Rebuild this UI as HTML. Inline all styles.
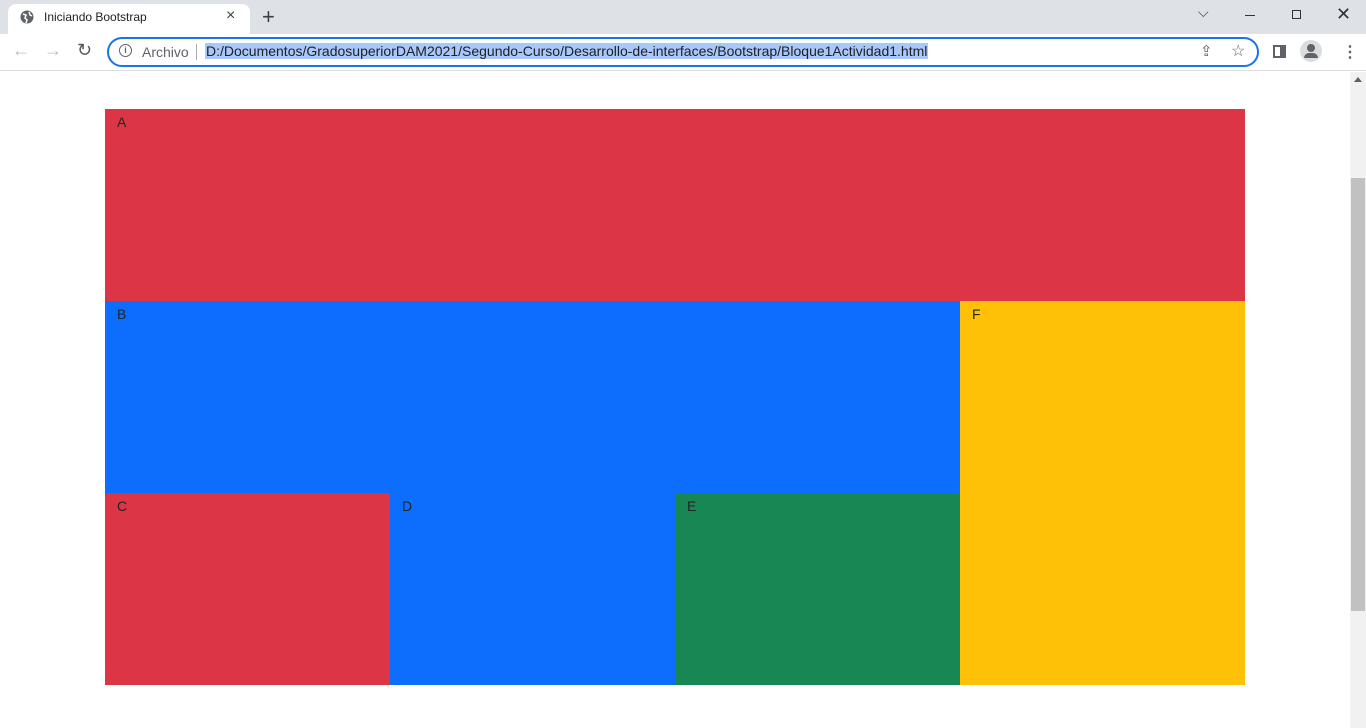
<!DOCTYPE html><html><head><style>
*{margin:0;padding:0;box-sizing:border-box}
body{width:1366px;height:728px;overflow:hidden;background:#fff;font-family:"Liberation Sans",sans-serif;position:relative}
.a{position:absolute}
.b{position:absolute;font-size:14px;color:#212529;padding:5px 12px}
</style></head><body>
<div class="a" style="left:0;top:0;width:1366px;height:34px;background:#dee1e6"></div>
<div class="a" style="left:8px;top:4px;width:242px;height:30px;background:#fff;border-radius:8px 8px 0 0"></div>
<svg class="a" style="left:20px;top:10px" width="14" height="14" viewBox="0 0 14 14"><circle cx="7" cy="7" r="6.5" fill="#5f6368"/><path d="M3 4 L6 5 L5 8 L7 10 L6 13 M9 2 L10 5 L12 6" stroke="#fff" stroke-width="1.5" fill="none"/></svg>
<div class="a" style="left:44px;top:10px;font-size:12px;color:#202124">Iniciando Bootstrap</div>
<div class="a" style="left:226px;top:7px;font-size:16px;color:#3c4043">×</div>
<div class="a" style="left:262px;top:4px;font-size:22px;color:#3c4043">+</div>
<div class="a" style="left:1198px;top:4px;font-size:14px;color:#3c4043">⌵</div>
<div class="a" style="left:1245px;top:15px;width:10px;height:1px;background:#333"></div>
<div class="a" style="left:1292px;top:10px;width:9px;height:9px;border:1px solid #333"></div>
<div class="a" style="left:1336px;top:4px;font-size:18px;color:#333">✕</div>
<div class="a" style="left:0;top:34px;width:1366px;height:37px;background:#fff;border-bottom:1px solid #dadce0"></div>
<div class="a" style="left:12px;top:40px;font-size:18px;color:#bbb">←</div>
<div class="a" style="left:44px;top:40px;font-size:18px;color:#bbb">→</div>
<div class="a" style="left:77px;top:40px;font-size:18px;color:#555">↻</div>
<div class="a" style="left:107px;top:37px;width:1152px;height:30px;border:2px solid #1a73e8;border-radius:15px;background:#fff"></div>
<div class="a" style="left:119px;top:44px;width:13px;height:13px;border:1.5px solid #5f6368;border-radius:50%;font-size:9px;text-align:center;line-height:10px;color:#5f6368;font-weight:bold">i</div>
<div class="a" style="left:142px;top:44px;font-size:14px;color:#5f6368">Archivo</div>
<div class="a" style="left:196px;top:44px;width:1px;height:16px;background:#aaa"></div>
<div class="a" style="left:205px;top:43px;font-size:14px;color:#202124;background:#a8c7fa;padding:0 1px">D:/Documentos/GradosuperiorDAM2021/Segundo-Curso/Desarrollo-de-interfaces/Bootstrap/Bloque1Actividad1.html</div>
<div class="a" style="left:1200px;top:42px;font-size:15px;color:#5f6368">⇪</div>
<div class="a" style="left:1231px;top:41px;font-size:16px;color:#5f6368">☆</div>
<div class="a" style="left:1273px;top:45px;width:13px;height:13px;border:2px solid #5f6368;border-right-width:6px"></div>
<div class="a" style="left:1300px;top:40px;width:22px;height:22px;border-radius:50%;background:#dadce0"></div>
<div class="a" style="left:1307px;top:44px;width:8px;height:8px;border-radius:50%;background:#5f6368"></div>
<div class="a" style="left:1304px;top:53px;width:14px;height:5px;border-radius:5px 5px 0 0;background:#5f6368"></div>
<div class="a" style="left:1342px;top:42px;font-size:16px;color:#5f6368;font-weight:bold">⋮</div>
<div class="a" style="left:1350px;top:72px;width:16px;height:656px;background:#f1f1f1"></div>
<div class="a" style="left:1351px;top:178px;width:14px;height:433px;background:#c1c1c1"></div>
<div class="a" style="left:1354px;top:77px;border:4px solid transparent;border-bottom:5px solid #606060;border-top:0"></div>
<div class="b" style="left:105px;top:109px;width:1140px;height:192px;background:#dc3545">A</div>
<div class="b" style="left:105px;top:301px;width:855px;height:192px;background:#0d6efd">B</div>
<div class="b" style="left:960px;top:301px;width:285px;height:384px;background:#ffc107">F</div>
<div class="b" style="left:105px;top:493px;width:285px;height:192px;background:#dc3545">C</div>
<div class="b" style="left:390px;top:493px;width:285px;height:192px;background:#0d6efd">D</div>
<div class="b" style="left:675px;top:493px;width:285px;height:192px;background:#198754">E</div>
</body></html>
